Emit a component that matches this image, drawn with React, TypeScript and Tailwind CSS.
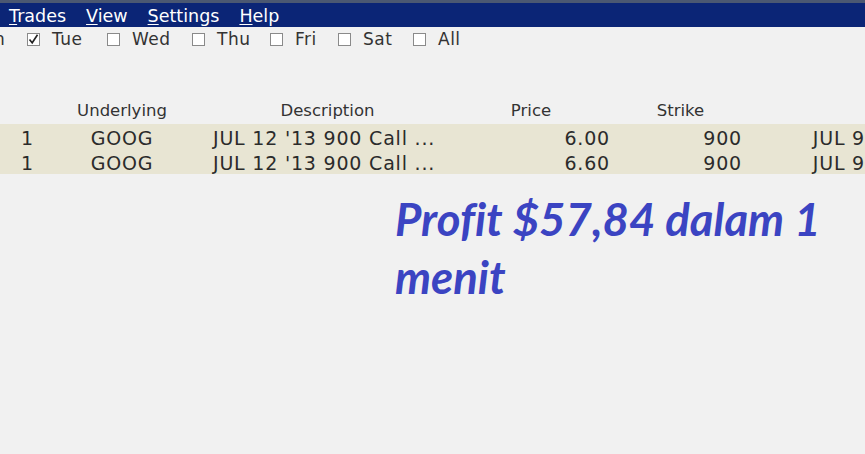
import { ReactNode } from 'react'

const days = [
  { label: 'Tue', checked: true, w: 'w-[33px]' },
  { label: 'Wed', checked: false, w: 'w-[38px]' },
  { label: 'Thu', checked: false, w: 'w-[31px]' },
  { label: 'Fri', checked: false, w: 'w-[21px]' },
  { label: 'Sat', checked: false, w: 'w-[28px]' },
  { label: 'All', checked: false, w: 'w-[19px]' },
]

const rows = [
  { qty: '1', sym: 'GOOG', desc: "JUL 12 '13 900 Call ...", price: '6.00', strike: '900', exp: 'JUL 9' },
  { qty: '1', sym: 'GOOG', desc: "JUL 12 '13 900 Call ...", price: '6.60', strike: '900', exp: 'JUL 9' },
]

function MenuItem({ first, rest }: { first: string; rest: string }) {
  return (
    <span>
      <span className="underline underline-offset-2">{first}</span>
      {rest}
    </span>
  )
}

function Box({ checked }: { checked: boolean }) {
  return (
    <span className="w-[13px] h-[13px] border border-[#8a8a8a] bg-white flex items-center justify-center shrink-0">
      {checked && (
        <svg width="11" height="11" viewBox="0 0 11 11">
          <path d="M1.5 5.5 L4.2 8.8 L9.5 0.8" fill="none" stroke="#222" strokeWidth="1.6" />
        </svg>
      )}
    </span>
  )
}

function Cell({ w, align, children }: { w: string; align: string; children: ReactNode }) {
  return <div className={`${w} ${align} shrink-0`}>{children}</div>
}

export default function App() {
  return (
    <div className="w-[865px] h-[454px] overflow-hidden bg-[#f1f1f1] font-['DejaVu_Sans',sans-serif] text-[#2a2a2a]">
      <div className="h-[3px] bg-[#4b5872]" />
      <div className="h-[24px] bg-[#0b2576] flex items-center gap-[20px] pl-[9px] pt-[3px] text-[17.5px] text-white leading-none">
        <MenuItem first="T" rest="rades" />
        <MenuItem first="V" rest="iew" />
        <MenuItem first="S" rest="ettings" />
        <MenuItem first="H" rest="elp" />
      </div>
      <div className="h-[25px] flex items-center text-[17px] leading-none text-[#333] -ml-[6px] whitespace-nowrap">
        <span className="w-[33px]">n</span>
        {days.map((d) => (
          <div key={d.label} className="flex items-center gap-[12px] mr-[22px]">
            <Box checked={d.checked} />
            <span className={`${d.w} tracking-[0.5px]`}>{d.label}</span>
          </div>
        ))}
      </div>
      <div className="h-[47px]" />
      <div className="h-[25px] flex items-center text-[16.5px] text-[#333] leading-none">
        <Cell w="w-[60px]" align="text-center">{''}</Cell>
        <Cell w="w-[124px]" align="text-center">Underlying</Cell>
        <Cell w="w-[287px]" align="text-center">Description</Cell>
        <Cell w="w-[120px]" align="text-center">Price</Cell>
        <Cell w="w-[179px]" align="text-center">Strike</Cell>
      </div>
      <div className="bg-[#e8e5d3]">
        {rows.map((r, i) => (
          <div key={i} className="h-[25px] flex items-center pt-[3px] text-[19px] tracking-[0.8px] leading-none text-[#2b2b2b] whitespace-nowrap">
            <Cell w="w-[60px]" align="text-left pl-[21px]">{r.qty}</Cell>
            <Cell w="w-[124px]" align="text-center">{r.sym}</Cell>
            <Cell w="w-[287px]" align="text-left pl-[29px]">{r.desc}</Cell>
            <Cell w="w-[139px]" align="text-right">{r.price}</Cell>
            <Cell w="w-[132px]" align="text-right">{r.strike}</Cell>
            <Cell w="w-[123px]" align="text-right">{r.exp}</Cell>
          </div>
        ))}
      </div>
      <div className="pl-[395px] pt-[16px] pr-[10px] font-['Lato',sans-serif] font-bold italic text-[45.5px] leading-[58px] text-[#3b44c2] [font-variant-ligatures:none]">
        Profit $57,84 dalam 1 menit
      </div>
    </div>
  )
}
